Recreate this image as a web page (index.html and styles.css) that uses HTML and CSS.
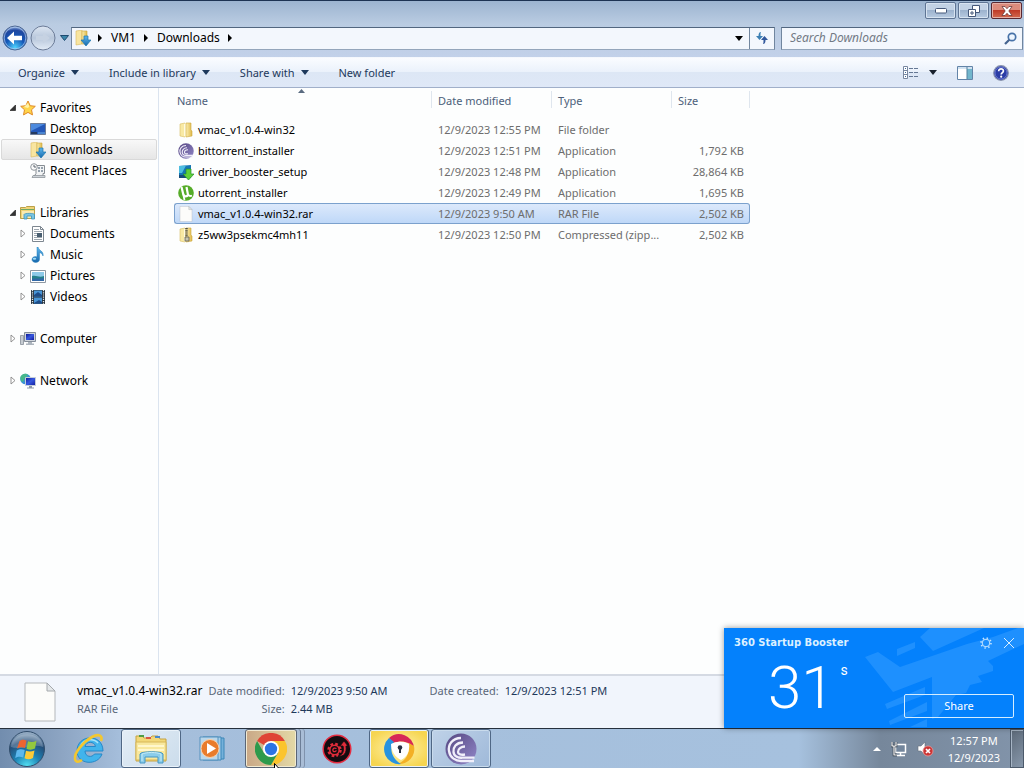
FILE: index.html
```
<!DOCTYPE html>
<html lang="en">
<head>
    <meta charset="UTF-8">
    <meta name="viewport" content="width=device-width, initial-scale=1.0">
    <title>Downloads</title>
    <link rel="stylesheet" href="styles.css">
</head>
<body>
    <!-- Shared icons -->
    <svg class="defs" width="0" height="0" aria-hidden="true">
        <defs>
            <linearGradient id="gold" x1="0" x2="1"><stop offset="0" stop-color="#fbeeb0"/><stop offset="1" stop-color="#dfb94a"/></linearGradient>
            <linearGradient id="sky" x1="0" y1="0" x2="0" y2="1"><stop offset="0" stop-color="#5db7ee"/><stop offset="1" stop-color="#1769ad"/></linearGradient>
            <linearGradient id="screen" x1="0" y1="0" x2="1" y2="1"><stop offset="0" stop-color="#0b1793"/><stop offset=".5" stop-color="#3658e0"/><stop offset="1" stop-color="#101b9b"/></linearGradient>
            <linearGradient id="purple" x1="0" y1="0" x2="1" y2="1"><stop offset="0" stop-color="#554680"/><stop offset="1" stop-color="#9288c9"/></linearGradient>
        </defs>
        <symbol id="folder" viewBox="0 0 16 16">
            <path d="M2 2l5-1v14l-5-1z" fill="#f8e9a4" stroke="#d9bd62" stroke-width=".6"/>
            <path d="M6 2l2-1v14l-2-1z" fill="#fffbe0"/>
            <path d="M8 1h5v7l1 1v5l-6 1z" fill="url(#gold)" stroke="#cfa83e" stroke-width=".6"/>
        </symbol>
        <symbol id="downloads" viewBox="0 0 16 16">
            <path d="M1 1l6-1v14l-6 1z" fill="#f8e5a0" stroke="#d8b95e" stroke-width=".6"/>
            <path d="M7 1h5v13H7z" fill="url(#gold)" stroke="#cfa83e" stroke-width=".6"/>
            <path d="M9 6h4v4h3l-5 6-5-6h3z" fill="url(#sky)" stroke="#1a75ae" stroke-width=".7"/>
        </symbol>
        <symbol id="expand" viewBox="0 0 6 9"><path d="M1 1l4 3.500-4 3.500z" fill="#fff" stroke="#888" stroke-width=".9"/></symbol>
        <symbol id="collapse" viewBox="0 0 6 6"><path d="M5.500 0v5.500H0z" fill="#333" stroke="#111" stroke-width=".6"/></symbol>
        <symbol id="caret" viewBox="0 0 8 5"><path d="M0 0h8L4 5z" fill="currentColor"/></symbol>
        <symbol id="crumb" viewBox="0 0 4 8"><path d="M0 0l4 4-4 4z" fill="#000"/></symbol>
        <symbol id="page" viewBox="0 0 32 40">
            <path d="M1 1h22l8 8v30H1z" fill="#fcfcfa" stroke="#b4b7ba"/>
            <path d="M23 1v8h8z" fill="#e4e7e9" stroke="#a4a8ac"/>
        </symbol>
        <symbol id="bittorrent" viewBox="0 0 32 32">
            <circle cx="16" cy="16" r="15.500" fill="url(#purple)"/>
            <g fill="none" stroke="#f1effa" stroke-width="2.300">
                <path d="M16 5C7 5 3 12 4 18c1 7 7 10 12 10h13"/>
                <path d="M18 9.500c-7 0-10 5-9.500 9.500.5 4.500 5 6 9 5.700h12"/>
                <path d="M20 13.500c-4 0-7 2.500-7 5.500 0 2.500 3 3.200 7 2.500"/>
            </g>
        </symbol>
    </svg>

    <!-- Window title bar -->
    <header class="titlebar">
        <button class="window-button" aria-label="Minimize">
            <svg width="12" height="6" viewBox="0 0 12 6"><rect x=".5" y=".5" width="11" height="4.500" rx="1" fill="#fff" stroke="#45587a"/></svg>
        </button>
        <button class="window-button" aria-label="Restore">
            <svg width="12" height="12" viewBox="0 0 12 12"><g fill="#fff" stroke="#45587a"><path d="M4.500.5h7v7h-7z"/><path d="M.5 4.500h7v7h-7z"/><path d="M3 7h2v2H3z"/></g></svg>
        </button>
        <button class="window-button window-close" aria-label="Close">
            <svg width="12" height="10" viewBox="0 0 12 10"><path d="M1 .5h3l2 2.200L8 .5h3L7.800 5 11 9.500H8L6 7.300 4 9.500H1L4.200 5z" fill="#fff" stroke="#5f2b2b" stroke-width=".7"/></svg>
        </button>
    </header>

    <!-- Address and search -->
    <div class="navbar">
        <button class="round-button" aria-label="Back">
            <svg width="26" height="26" viewBox="0 0 26 26">
                <defs><radialGradient id="orbBlue" cx=".5" cy=".9" r=".9"><stop offset="0" stop-color="#4fd4ff"/><stop offset=".45" stop-color="#1458b8"/><stop offset=".8" stop-color="#2048a0"/><stop offset="1" stop-color="#a4bfe8"/></radialGradient></defs>
                <circle cx="13" cy="13" r="12" fill="url(#orbBlue)" stroke="#506a94"/>
                <circle cx="13" cy="13" r="10.800" fill="none" stroke="#b4cdf0" stroke-opacity=".7"/>
                <path d="M5 13l7-6.500v4.300h8v4.400h-8v4.300z" fill="#fff"/>
            </svg>
        </button>
        <button class="round-button" aria-label="Forward">
            <svg width="26" height="26" viewBox="0 0 26 26">
                <defs><linearGradient id="orbGrey" x1="0" y1="0" x2="0" y2="1"><stop offset="0" stop-color="#dde6f2"/><stop offset=".5" stop-color="#b8c7db"/><stop offset="1" stop-color="#e3ecf7"/></linearGradient></defs>
                <circle cx="13" cy="13" r="12" fill="url(#orbGrey)" stroke="#6c7c98"/>
                <path d="M20 13l-7-5.500v3.500H6v4h7v3.500z" fill="#c6d2e2"/>
            </svg>
        </button>
        <button class="history-button" aria-label="Recent pages">
            <svg width="9" height="6" viewBox="0 0 9 6"><path d="M.5.5h8l-4 5z" fill="#3a86aa" stroke="#1e4a70"/></svg>
        </button>
        <div class="address">
            <svg class="icon" width="16" height="16"><use href="#downloads"/></svg>
            <svg class="crumb" width="4" height="8"><use href="#crumb"/></svg>
            <a href="#">VM1</a>
            <svg class="crumb" width="4" height="8"><use href="#crumb"/></svg>
            <a href="#">Downloads</a>
            <svg class="crumb" width="4" height="8"><use href="#crumb"/></svg>
            <button class="address-drop" aria-label="Previous locations"><svg width="8" height="5"><use href="#caret"/></svg></button>
            <button class="refresh" aria-label="Refresh">
                <svg width="14" height="14" viewBox="0 0 14 14"><path d="M6 1C4 1 3.500 3 3.500 5H1l3.500 4L8 5H5.500C5.500 3 5.500 2 6 1z" fill="#3c80b4"/><path d="M8 13c2 0 2.500-2 2.500-4H13L9.500 5 6 9h2.500c0 2 0 3-.5 4z" fill="#31589c"/></svg>
            </button>
        </div>
        <form class="search">
            <input type="text" placeholder="Search Downloads" aria-label="Search Downloads">
            <button type="button" aria-label="Search">
                <svg width="13" height="13" viewBox="0 0 13 13"><circle cx="8" cy="5" r="3.700" fill="#eef6ff" stroke="#4772a8" stroke-width="1.700"/><path d="M5.300 7.700L1 12" stroke="#45638f" stroke-width="2.200"/></svg>
            </button>
        </form>
    </div>

    <!-- Command bar -->
    <div class="toolbar">
        <button>Organize <svg width="8" height="5"><use href="#caret"/></svg></button>
        <button>Include in library <svg width="8" height="5"><use href="#caret"/></svg></button>
        <button>Share with <svg width="8" height="5"><use href="#caret"/></svg></button>
        <button>New folder</button>
        <div class="toolbar-right">
            <button class="view-button" aria-label="Change your view">
                <svg width="16" height="13" viewBox="0 0 16 13"><g fill="#fff" stroke="#78879f"><path d="M.5.5h4v12h-4zM.5 4.500h4M.5 8.500h4"/></g><path d="M6 2.500h4m1 0h4M6 6.500h4m1 0h4M6 10.500h4m1 0h4" stroke="#657894"/><path d="M2 2.500h1M2 6.500h1M2 10.500h1" stroke="#37699c"/></svg>
                <svg width="8" height="5"><use href="#caret"/></svg>
            </button>
            <button aria-label="Preview pane">
                <svg width="16" height="14" viewBox="0 0 16 14"><path d="M.5.5h15v13H.5z" fill="#fff" stroke="#6284a8"/><path d="M1 1h14v2H1z" fill="#d1e2f1"/><path d="M10 3h5v10h-5z" fill="#72b6cc"/><path d="M10 1v12" stroke="#52809d"/></svg>
            </button>
            <button aria-label="Help">
                <svg width="16" height="16" viewBox="0 0 16 16"><circle cx="8" cy="8" r="7.300" fill="#2b3da5" stroke="#8993ae" stroke-width="1.200"/><circle cx="8" cy="8" r="6" fill="none" stroke="#6877cf"/><path d="M5.700 6.200C5.700 3 10.500 3.300 10.400 6c0 1.600-2.200 1.700-2.200 3.600" fill="none" stroke="#fff" stroke-width="1.700"/><circle cx="8.200" cy="11.700" r="1.100" fill="#fff"/></svg>
            </button>
        </div>
    </div>

    <!-- Tree and file list -->
    <main class="explorer">
        <nav class="sidebar">
            <ul>
                <li><a href="#"><svg class="arrow" width="6" height="6"><use href="#collapse"/></svg>
                    <svg width="16" height="16" viewBox="0 0 16 16"><path d="M8 1l2.200 4.700 5.100.6-3.800 3.500 1 5.100L8 12.400l-4.500 2.500 1-5.100L.7 6.300l5.100-.6z" fill="#ffd54a" stroke="#e08a28"/><path d="M8 3l1.300 3.500L8 8 4 7z" fill="#fff3a8"/></svg>Favorites</a></li>
                <li class="child"><a href="#"><span class="arrow"></span>
                    <svg width="16" height="16" viewBox="0 0 16 16"><path d="M.5 2.500h15v11H.5z" fill="#2358b8" stroke="#6d7d98"/><path d="M1 3h14L1 10z" fill="#4c8ade"/><path d="M1 11h6v2H1z" fill="#243a60"/><path d="M8 12h7" stroke="#71b1e8"/></svg>Desktop</a></li>
                <li class="child current"><a href="#"><span class="arrow"></span>
                    <svg width="16" height="16"><use href="#downloads"/></svg>Downloads</a></li>
                <li class="child"><a href="#"><span class="arrow"></span>
                    <svg width="16" height="16" viewBox="0 0 16 16"><path d="M6 2.500h8.500v8H13v3H4l2-3z" fill="#f2f4f5" stroke="#868d93"/><path d="M3 12.500h12v2H2z" fill="#cdd3d8" stroke="#858c92" stroke-width=".7"/><path d="M8 5h2m1 0h2M8 8h2m1 0h2" stroke="#778594" stroke-width="1.500"/><circle cx="4" cy="4" r="3.300" fill="#fafafa" stroke="#92989e"/><path d="M4 2v2h2" fill="none" stroke="#59636d"/></svg>Recent Places</a></li>
            </ul>
            <ul>
                <li><a href="#"><svg class="arrow" width="6" height="6"><use href="#collapse"/></svg>
                    <svg width="16" height="16" viewBox="0 0 16 16"><path d="M.5 2.500h5l1-1h8v12H.5z" fill="#f0d477" stroke="#bba049"/><path d="M1 4.500h13" stroke="#6fa866"/><path d="M2 6h12v7H2z" fill="#f9eab0"/><path d="M4 14V9.500c0-1.500 10.500-1.500 10.500 0V14h-3v-3H7v3z" fill="#7ac5e4" stroke="#3f94bc" stroke-width=".8"/></svg>Libraries</a></li>
                <li class="child"><a href="#"><svg class="arrow" width="6" height="9"><use href="#expand"/></svg>
                    <svg width="16" height="16" viewBox="0 0 16 16"><path d="M2.500.5h8l3 3v12h-11z" fill="#fff" stroke="#7d8790"/><path d="M10.500.5v3h3" fill="none" stroke="#7d8790"/><path d="M4 3.500h5M4 5.500h8M4 7.500h3M4 9.500h3M4 11.500h8M4 13.500h8" stroke="#84909b" stroke-width=".8"/><path d="M7 7h5v4H7z" fill="#485e70"/></svg>Documents</a></li>
                <li class="child"><a href="#"><svg class="arrow" width="6" height="9"><use href="#expand"/></svg>
                    <svg width="16" height="16" viewBox="0 0 16 16"><path d="M8 0c1 4 6 4 5 9-.5-2-2-3-3.500-3.500v6.700c0 4.300-7.500 4.200-7.500.3 0-2.500 3-3.500 5-2.500V0z" fill="url(#sky)" stroke="#2680bc" stroke-width=".5"/><ellipse cx="4.500" cy="11.700" rx="1.700" ry="1" fill="#a4def6"/></svg>Music</a></li>
                <li class="child"><a href="#"><svg class="arrow" width="6" height="9"><use href="#expand"/></svg>
                    <svg width="16" height="16" viewBox="0 0 16 16"><path d="M.5 2.500h15v12H.5z" fill="#fff" stroke="#8e98a2"/><path d="M2 4h12v9H2z" fill="#8ecae8"/><path d="M2 8c5-1 7 2 12 0v5H2z" fill="#25818b"/><path d="M2 11c4-1 9 0 12-1v3H2z" fill="#3168a6"/></svg>Pictures</a></li>
                <li class="child"><a href="#"><svg class="arrow" width="6" height="9"><use href="#expand"/></svg>
                    <svg width="16" height="16" viewBox="0 0 16 16"><path d="M1 1h14v14H1z" fill="#26313b"/><path d="M4 1.500h8v6H4zM4 8.500h8v6H4z" fill="#4895d6"/><path d="M4 6l4-3 4 3v1.500H4zM4 14l5-3 3 2v1.500H4z" fill="#1d4c88"/><path d="M2.500 1v14M13.500 1v14" stroke="#e5edf2" stroke-width="1.300" stroke-dasharray="1.200 1"/></svg>Videos</a></li>
            </ul>
            <ul>
                <li><a href="#"><svg class="arrow" width="6" height="9"><use href="#expand"/></svg>
                    <svg width="16" height="16" viewBox="0 0 16 16"><path d="M.5 4.500h3v9h-3z" fill="#c6ccd2" stroke="#888f98" stroke-width=".8"/><path d="M4.500 1.500h11v9h-11z" fill="#cfd5dc" stroke="#858e9a"/><path d="M6 3h8v6H6z" fill="url(#screen)"/><path d="M8 11h4v1.500h2V14H6v-1.500h2z" fill="#adb5be"/></svg>Computer</a></li>
            </ul>
            <ul>
                <li><a href="#"><svg class="arrow" width="6" height="9"><use href="#expand"/></svg>
                    <svg width="16" height="16" viewBox="0 0 16 16"><circle cx="5.500" cy="6" r="5.300" fill="#3a91d4"/><path d="M2 2c3-2 5-1 6 0L5 5 3 9 1 8C0 5 0 3 2 2z" fill="#46b88b"/><path d="M5.500 4.500h10v8h-10z" fill="url(#screen)" stroke="#c5ced9"/><path d="M9 13h3v1.500h2v1H7v-1h2z" fill="#8e9aaa"/></svg>Network</a></li>
            </ul>
        </nav>

        <section class="files">
            <table>
                <colgroup><col class="col-name"><col class="col-mid"><col class="col-mid"><col class="col-size"></colgroup>
                <thead>
                    <tr>
                        <th scope="col">Name<svg class="sort" width="7" height="4" viewBox="0 0 7 4"><path d="M0 4l3.500-4L7 4z" fill="#5a6b80"/></svg></th>
                        <th scope="col">Date modified</th>
                        <th scope="col">Type</th>
                        <th scope="col">Size</th>
                    </tr>
                </thead>
                <tbody>
                    <tr>
                        <td><a href="#"><svg width="16" height="16"><use href="#folder"/></svg>vmac_v1.0.4-win32</a></td>
                        <td>12/9/2023 12:55 PM</td><td>File folder</td><td></td>
                    </tr>
                    <tr>
                        <td><a href="#"><svg width="16" height="16"><use href="#bittorrent"/></svg>bittorrent_installer</a></td>
                        <td>12/9/2023 12:51 PM</td><td>Application</td><td>1,792 KB</td>
                    </tr>
                    <tr>
                        <td><a href="#"><svg width="16" height="16" viewBox="0 0 16 16"><path d="M1 2l12-1v13H1z" fill="#1676b5"/><path d="M1 2l7-.5L4 9H1z" fill="#4dbde0"/><path d="M1 11h7v3H1z" fill="#164b78"/><path d="M8 5h5v5h3l-5.500 6L5 10h3z" fill="#5fd038" stroke="#258c2c" stroke-width=".7"/></svg>driver_booster_setup</a></td>
                        <td>12/9/2023 12:48 PM</td><td>Application</td><td>28,864 KB</td>
                    </tr>
                    <tr>
                        <td><a href="#"><svg width="16" height="16" viewBox="0 0 16 16"><circle cx="8" cy="8" r="7.800" fill="#55ac28"/><path d="M3.500 2l1.700 7c.6 3 3.800 3 4.800.8L8.500 2" fill="none" stroke="#fff" stroke-width="2.200"/><path d="M10 9.500c1 1.700 2.500 1.800 4 1.200M5.200 9l1.300 6" fill="none" stroke="#fff" stroke-width="1.800"/></svg>utorrent_installer</a></td>
                        <td>12/9/2023 12:49 PM</td><td>Application</td><td>1,695 KB</td>
                    </tr>
                    <tr class="selected">
                        <td><a href="#"><svg width="16" height="16"><use href="#page"/></svg>vmac_v1.0.4-win32.rar</a></td>
                        <td>12/9/2023 9:50 AM</td><td>RAR File</td><td>2,502 KB</td>
                    </tr>
                    <tr>
                        <td><a href="#"><svg width="16" height="16" viewBox="0 0 16 16"><use href="#folder"/><path d="M8.500 1v11" stroke="#4d4c43" stroke-width="2.500" stroke-dasharray="1.200 1"/><path d="M7 10h4v4H7z" fill="#c7c5b2" stroke="#66614c" stroke-width=".8"/></svg>z5ww3psekmc4mh11</a></td>
                        <td>12/9/2023 12:50 PM</td><td>Compressed (zipp...</td><td>2,502 KB</td>
                    </tr>
                </tbody>
            </table>
        </section>
    </main>

    <!-- Details pane -->
    <footer class="details">
        <svg width="32" height="40"><use href="#page"/></svg>
        <div class="details-name">
            <strong>vmac_v1.0.4-win32.rar</strong>
            <span>RAR File</span>
        </div>
        <dl>
            <dt>Date modified:</dt><dd>12/9/2023 9:50 AM</dd>
            <dt>Size:</dt><dd>2.44 MB</dd>
        </dl>
        <dl>
            <dt>Date created:</dt><dd>12/9/2023 12:51 PM</dd>
        </dl>
    </footer>

    <!-- Taskbar -->
    <div class="taskbar">
        <button class="start" aria-label="Start">
            <svg width="38" height="38" viewBox="0 0 38 38">
                <defs><radialGradient id="startOrb" cx=".5" cy="1" r=".95"><stop offset="0" stop-color="#55e4f5"/><stop offset=".4" stop-color="#1d83b5"/><stop offset=".75" stop-color="#254e79"/><stop offset="1" stop-color="#92aac2"/></radialGradient></defs>
                <circle cx="19" cy="19" r="17.500" fill="url(#startOrb)" stroke="#314d6b"/>
                <path d="M3 17C4 0 34 0 35 17c-10-4-20 4-32 0z" fill="#fff" opacity=".22"/>
                <path d="M11.500 11c3-2 4-1.500 7-.5L17 18c-3-1-5-1-8 .5z" fill="#ee6431"/>
                <path d="M20 11.300c3 1.200 5.500 1 8.500-.5L27 18.500c-3 1.500-5.500 1.500-8.500.2z" fill="#93c83e"/>
                <path d="M8.700 20.500c3-1.500 5-1.500 8-.5l-1.500 7.500c-3-1-5-1-8 .5z" fill="#5db8ee"/>
                <path d="M18 20.700c3 1.200 5.500 1 8.500-.3L25 28c-3 1.500-5.500 1.500-8.500.3z" fill="#fdcb38"/>
            </svg>
        </button>
        <button class="task" aria-label="Internet Explorer">
            <svg width="34" height="34" viewBox="0 0 34 34">
                <path d="M31 19H13c0 6 7 7 9.500 3H30c-4 12-25 11-25-3C5 2 31 1 31 19zM13 14.500h10.500c-1-5.500-9.500-5.500-10.500 0z" fill="#41b4ec" stroke="#2788c8"/>
                <path d="M9 13c3-6 13-7 17-2" fill="none" stroke="#a6e3fa" stroke-width="1.500"/>
                <path d="M29 9c2-5-2-8-9-4C11 10 2 21 3 27c1 4 4 3 7 1" fill="none" stroke="#f3c72f" stroke-width="2.600"/>
            </svg>
        </button>
        <button class="task open" aria-label="Windows Explorer">
            <svg width="34" height="32" viewBox="0 0 34 32">
                <path d="M2 3h6l2 2h6l2-2h6l2 3h6v22H2z" fill="#f2d878" stroke="#c6a343"/>
                <path d="M5 2h5v2H5z" fill="#4e9d46"/><path d="M12 4h5v2h-5z" fill="#d85744"/><path d="M21 3h5v2h-5z" fill="#4a89ca"/>
                <path d="M2 9h30v18H2z" fill="#f8e89e" stroke="#d7b758"/>
                <path d="M4 13h26M4 17h26" stroke="#fff7cd" stroke-width="2"/>
                <path d="M6 30V21c0-3 23-3 23 0v9h-5v-6H11v6z" fill="#8bcdea" stroke="#4597c5"/>
                <path d="M8 28v-7c4-2 15-2 19 0v7" fill="none" stroke="#c7ecf7"/>
            </svg>
        </button>
        <button class="task" aria-label="Windows Media Player">
            <svg width="28" height="26" viewBox="0 0 28 26">
                <path d="M8 2h17v21H8z" fill="#75b1da" stroke="#3c87b8"/><path d="M4 1h18v23H4z" fill="#a5cee9" stroke="#3c87b8"/><path d="M1 1h18v23H1z" fill="#b9d7eb" stroke="#5692be"/>
                <circle cx="11" cy="12.500" r="9" fill="#e87c2c" stroke="#fbd0a8"/><path d="M8 7l9 5.500L8 18z" fill="#fff"/>
            </svg>
        </button>
        <button class="task chrome" aria-label="Google Chrome">
            <svg width="32" height="32" viewBox="0 0 32 32">
                <path d="M16 16L2.100 8A16 16 0 0 1 29.900 8z" fill="#df4436"/>
                <path d="M16 16V8h13.900A16 16 0 0 1 16 32l7-12z" fill="#fbc42d"/>
                <path d="M9 20L2.100 8A16 16 0 0 0 16 32l7-12z" fill="#2d9a4c"/>
                <circle cx="16" cy="16" r="8" fill="#fff"/><circle cx="16" cy="16" r="6.200" fill="#2c74e4"/>
            </svg>
            <svg class="cursor" width="9" height="12" viewBox="0 0 9 12"><path d="M.5.5v12l3-3h5z" fill="#fff" stroke="#000"/></svg>
        </button>
        <button class="task" aria-label="Driver Booster">
            <svg width="30" height="30" viewBox="0 0 30 30">
                <circle cx="15" cy="15" r="13.800" fill="#140c10" stroke="#e52b40" stroke-width="1.500"/>
                <circle cx="12.500" cy="16" r="6" fill="none" stroke="#e02c3a" stroke-width="2.500" stroke-dasharray="2.600 2.110"/>
                <circle cx="12.500" cy="16" r="4.700" fill="none" stroke="#e02c3a" stroke-width="1.600"/><path d="M14.500 14.500c-4-2-5 3.500-1.500 3.200l1.500-1.200" fill="none" stroke="#e02c3a" stroke-width="1.300"/>
                <path d="M16 22c6-1 6-7 5-10h-3l4-5 4 5h-2c1 7-2 11-8 10z" fill="#e02c3a" stroke="#140c10" stroke-width=".8"/>
            </svg>
        </button>
        <button class="task alert" aria-label="Secure Browser">
            <svg width="32" height="32" viewBox="0 0 32 32">
                <path d="M6 5A15 15 0 0 1 31 15c-5-7-13-8-21-5z" fill="#d72857"/>
                <path d="M31 13A15 15 0 0 1 15 31c9-4 12-12 11-21z" fill="#f3b026"/>
                <path d="M18 31A15 15 0 0 1 6 5l5 4C6 14 8 25 18 31z" fill="#2893df"/>
                <path d="M8 11c6-3 12-3 18 0 1 7-2 13-8 16-6-3-10-9-10-16z" fill="#fff"/>
                <circle cx="17" cy="14.500" r="2.300" fill="#283142"/><path d="M16 15h2v5h-2z" fill="#283142"/>
            </svg>
        </button>
        <button class="task running" aria-label="BitTorrent">
            <svg width="32" height="32"><use href="#bittorrent"/></svg>
        </button>

        <div class="tray">
            <button aria-label="Show hidden icons"><svg width="8" height="4" viewBox="0 0 8 4"><path d="M0 4l4-4 4 4z" fill="#fff"/></svg></button>
            <button aria-label="Network">
                <svg width="16" height="16" viewBox="0 0 16 16"><path d="M4.500 3.500h10v8h-10z" fill="#73869c" stroke="#fff" stroke-width="1.500"/><path d="M9.500 12v2M6 14.500h8" stroke="#fff" stroke-width="1.500"/><path d="M1 1v4h4V1M3 5v9h3" fill="none" stroke="#293441" stroke-width="2.500"/><path d="M1 1v4h4V1M3 5v9h3" fill="none" stroke="#fff" stroke-width="1.200"/></svg>
            </button>
            <button aria-label="Speakers muted">
                <svg width="17" height="16" viewBox="0 0 17 16"><path d="M1 5h3l4-4v13l-4-4H1z" fill="#fff" stroke="#66717e" stroke-width=".6"/><circle cx="11" cy="10" r="5" fill="#cc3535" stroke="#e99999" stroke-width=".8"/><path d="M9 8l4 4m0-4l-4 4" stroke="#fff" stroke-width="1.700"/></svg>
            </button>
            <div class="clock"><time>12:57 PM</time><time>12/9/2023</time></div>
            <button class="show-desktop" aria-label="Show desktop"></button>
        </div>
    </div>

    <!-- Startup popup -->
    <aside class="booster">
        <svg class="plane" width="160" height="100" viewBox="0 0 160 100" aria-hidden="true">
            <g fill="#1e90fe">
                <path d="M1 29l13-5 22 15 67-23 26-7 25-9h6v16l-36 17 5 5v5l-15 5 4 6-12 3-4 8-10 2-18 22-6 2V49L29 64z"/>
                <path d="M56 9L66 0h54L69 23zM33 21l18-7v6l-18 8zM21 76l40-17v8L23 81zM25 93l38-19v9l-37 14zM46 99l17-8v8z"/>
            </g>
        </svg>
        <h2>360 Startup Booster</h2>
        <div class="booster-controls">
            <button aria-label="Settings"><svg width="12" height="12" viewBox="0 0 12 12"><circle cx="6" cy="6" r="3.800" fill="none" stroke="#c5e4ff"/><circle cx="6" cy="6" r="5" fill="none" stroke="#c5e4ff" stroke-width="1.600" stroke-dasharray="1.400 2.530"/></svg></button>
            <button aria-label="Close"><svg width="10" height="10" viewBox="0 0 10 10"><path d="M0 0l10 10M10 0L0 10" stroke="#d9efff"/></svg></button>
        </div>
        <p class="seconds">31<sup>s</sup></p>
        <button class="share">Share</button>
    </aside>
</body>
</html>
```
FILE: styles.css
```
/* Basic styles */
* {
    box-sizing: border-box;
}
body {
    font-family: "Noto Sans", "Open Sans", sans-serif;
    font-size: 12px;
    line-height: 18px;
    margin: 0;
    height: 100vh;
    display: flex;
    flex-direction: column;
    position: relative;
    overflow: hidden;
    color: #000;
    background-color: #bfd0e8;
}
button {
    font: inherit;
    color: inherit;
    background: none;
    border: none;
    padding: 0;
    display: flex;
    align-items: center;
    justify-content: center;
}
a {
    color: inherit;
    text-decoration: none;
}
svg {
    flex: none;
}
.defs {
    position: absolute;
}
/* Title bar */
.titlebar {
    height: 24px;
    display: flex;
    justify-content: flex-end;
    align-items: flex-start;
    gap: 2px;
    padding: 1px 2px 0 0;
    border-top: 1px solid #1d3353;
    background: linear-gradient(#9cb4d0, #bacce2);
}
.window-button {
    width: 31px;
    height: 17px;
    border: 1px solid #5f7594;
    border-radius: 2px;
    box-shadow: inset 0 0 0 1px #d7e3f1;
    background: linear-gradient(#c2d2e5 50%, #9db3ce 50%, #b8cbe1);
}
.window-close {
    border-color: #5a2831;
    box-shadow: inset 0 0 0 1px #e5b1a7;
    background: linear-gradient(#dc8b7c 50%, #bf3b28 50%, #d36a50);
}
/* Address row */
.navbar {
    height: 33px;
    display: flex;
    align-items: center;
    padding: 0 1px 5px 2px;
    background: linear-gradient(#bacce2, #c2d1e9);
}
.round-button {
    width: 26px;
    height: 26px;
    margin-right: 2px;
}
.history-button {
    width: 13px;
}
.address {
    flex: 1;
    height: 23px;
    display: flex;
    align-items: center;
    padding-left: 3px;
    border: 1px solid #71869f;
    border-color: #52667f #71869f #93a5bb;
    background-color: #f3f7fd;
}
.crumb {
    margin: 0 9px 0 8px;
}
.icon + .crumb {
    margin-left: 7px;
}
.address-drop {
    height: 21px;
    width: 21px;
    margin-left: auto;
}
.refresh {
    height: 21px;
    width: 25px;
    border-left: 1px solid #71869f;
}
.search {
    width: 242px;
    height: 23px;
    margin-left: 6px;
    display: flex;
    padding-right: 5px;
    border: 1px solid #71869f;
    border-color: #52667f #71869f #93a5bb;
    background-color: #f3f7fd;
}
.search input {
    flex: 1;
    min-width: 0;
    padding: 0 0 0 8px;
    border: none;
    outline: none;
    background: none;
    font: inherit;
    font-style: italic;
}
.search input::placeholder {
    color: #727a85;
}
/* Command bar */
.toolbar {
    height: 31px;
    display: flex;
    align-items: center;
    gap: 30px;
    padding: 0 15px 0 18px;
    font-size: 11px;
    color: #1e395b;
    border-top: 1px solid #f4f8fd;
    border-bottom: 1px solid #a0afc9;
    background: linear-gradient(#fafcff, #eaf1fb 50%, #dde7f5 50%, #dfe8f7);
}
.toolbar button {
    gap: 6px;
}
.toolbar-right {
    margin-left: auto;
    display: flex;
    gap: 20px;
}
.toolbar .view-button {
    gap: 10px;
    color: #18202c;
}
/* Explorer panes */
.explorer {
    flex: 1;
    min-height: 0;
    display: flex;
    background-color: #fdfefe;
}
.sidebar {
    width: 159px;
    padding: 9px 1px 0;
    border-right: 1px solid #dbe4ef;
}
.sidebar ul {
    list-style: none;
    padding: 0;
    margin: 0 0 21px;
}
.sidebar a {
    height: 21px;
    display: flex;
    align-items: center;
    gap: 4px;
    padding-left: 9px;
    border: 1px solid transparent;
    border-left: none;
    white-space: nowrap;
}
.sidebar .child a {
    padding-left: 19px;
}
.sidebar .current a {
    border: 1px solid #d9d9d9;
    padding-left: 18px;
    border-radius: 2px;
    background: linear-gradient(#f8f8f8, #e6e6e6);
}
.arrow {
    width: 6px;
}
.files {
    flex: 1;
    padding: 0 15px;
}
/* File list */
table {
    width: 576px;
    max-width: 100%;
    table-layout: fixed;
    border-spacing: 0;
    font-size: 11px;
}
.col-mid {
    width: 120px;
}
.col-size {
    width: 78px;
}
th {
    position: relative;
    height: 31px;
    padding: 4px 6px 9px;
    text-align: left;
    font-weight: normal;
    color: #4c607a;
    background: linear-gradient(#dfe6ee, #dfe6ee) no-repeat right 3px / 1px 17px;
}
th:first-child {
    padding-left: 3px;
}
.sort {
    position: absolute;
    top: 1px;
    left: 48%;
}
td {
    height: 21px;
    padding: 0 6px;
    color: #6d6d6d;
    border: 1px solid transparent;
    border-width: 1px 0;
    white-space: nowrap;
}
td:first-child {
    padding-left: 4px;
    color: #000;
}
td:last-child {
    text-align: right;
}
td a {
    display: flex;
    align-items: center;
    gap: 4px;
}
.selected td {
    border-color: #7ba1cd;
    background: linear-gradient(#dce9fb, #bfd8f8);
}
.selected td:first-child {
    border-left: 1px solid #7ba1cd;
    border-radius: 3px 0 0 3px;
    padding-left: 3px;
}
.selected td:last-child {
    border-right: 1px solid #7ba1cd;
    border-radius: 0 3px 3px 0;
    padding-right: 5px;
}
/* Details pane */
.details {
    height: 54px;
    display: flex;
    padding: 6px 24px 0;
    border-top: 2px solid #d5dae3;
    background-color: #f1f5fc;
    font-size: 11px;
    color: #5a6779;
    white-space: nowrap;
}
.details-name {
    margin: 0 6px 0 21px;
    display: flex;
    flex-direction: column;
}
.details strong {
    font-size: 12px;
    font-weight: normal;
    color: #000;
}
.details dl {
    margin: 0 42px 0 0;
    display: grid;
    grid-template-columns: auto auto;
    grid-auto-rows: 18px;
    column-gap: 6px;
}
.details dt {
    text-align: right;
}
.details dd {
    margin: 0;
    color: #1e395b;
}
/* Taskbar */
.taskbar {
    height: 40px;
    display: flex;
    gap: 2px;
    border-top: 1px solid #26303d;
    background: linear-gradient(to right, #728dae, #8ca4c2 60px, #a5bedb 120px, #a6c1de 78%, #76879b 86%, #8294aa);
}
.start {
    width: 57px;
    padding-right: 3px;
}
.task {
    width: 60px;
    border-radius: 3px;
    position: relative;
}
.open,
.running,
.alert {
    border: 1px solid #4f6785;
    box-shadow: inset 0 0 0 1px #e9f2fa;
}
.open {
    background: linear-gradient(135deg, #e3edf6, #cbdceb);
}
.running {
    box-shadow: inset 0 0 0 1px #c9dbec;
    background: linear-gradient(135deg, #bfd2e8, #9fb9d9);
}
.alert {
    background: radial-gradient(#fff4b2, #f6d550 80%);
}
/* Grouped windows show as extra edges on the right */
.chrome {
    width: 52px;
    margin-right: 8px;
    border: 1px solid #5a6576;
    box-shadow: inset 0 0 0 1px #f1ead2, 3px 0 0 #a9bdd6, 4px 0 0 #6c7e97, 7px 0 0 #a9bdd6, 8px 0 0 #8093ad;
    background: linear-gradient(to right, #c9a887, #e4d9a6);
}
.cursor {
    position: absolute;
    right: 13px;
    bottom: -8px;
}
.tray {
    margin-left: auto;
    display: flex;
    align-items: center;
    gap: 10px;
    color: #fff;
}
.clock {
    display: flex;
    flex-direction: column;
    align-items: center;
    font-size: 11px;
    line-height: 17px;
    margin-left: 4px;
}
.show-desktop {
    width: 14px;
    height: 39px;
    border: 1px solid #4c5a6b;
    box-shadow: inset 1px 1px 0 #a7b5c5;
    background: linear-gradient(135deg, #5b6877, #8797aa);
}
/* Popup over the bottom right corner */
.booster {
    position: absolute;
    right: 0;
    bottom: 40px;
    width: 300px;
    height: 100px;
    display: grid;
    grid-template-columns: 1fr auto;
    grid-template-rows: 30px 1fr;
    padding: 0 10px 10px;
    color: #fff;
    background-color: #0481fc;
    box-shadow: 0 0 6px rgba(0, 0, 0, 0.4);
}
.plane {
    position: absolute;
    right: 0;
    top: 0;
}
.booster h2 {
    margin: 0;
    font-family: "DejaVu Sans", sans-serif;
    font-size: 10px;
    line-height: 30px;
    color: #dcf0ff;
}
.booster-controls {
    display: flex;
    justify-content: flex-end;
    gap: 12px;
    position: relative;
}
.seconds {
    margin: 0 0 0 34px;
    font-family: Roboto, sans-serif;
    font-weight: 300;
    font-size: 60px;
    line-height: 60px;
    display: flex;
}
.seconds sup {
    margin-left: 6px;
    font-size: 14px;
    font-weight: 400;
    line-height: 24px;
    vertical-align: baseline;
}
.share {
    width: 110px;
    height: 24px;
    align-self: end;
    position: relative;
    font-size: 11px;
    border: 1px solid #d5edff;
    border-radius: 2px;
}
```
